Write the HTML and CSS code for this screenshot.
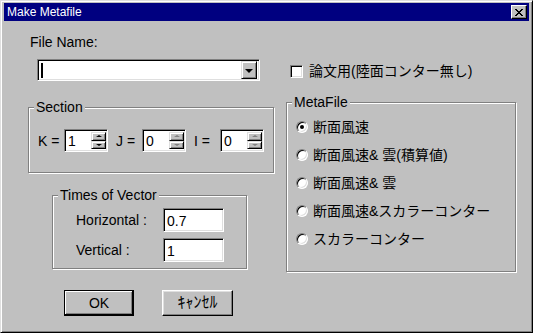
FILE: index.html
```html
<!DOCTYPE html>
<html lang="ja">
<head>
  <meta charset="UTF-8">
  <title>Make Metafile</title>
  <link rel="stylesheet" href="styles.css">
</head>
<body>
  <div class="window">
    <div class="titlebar">
      <span class="title">Make Metafile</span>
      <span class="close-btn">
        <svg width="8" height="7" viewBox="0 0 8 7" shape-rendering="crispEdges">
          <path d="M0 0h2v1h-2zM6 0h2v1h-2zM1 1h2v1h-2zM5 1h2v1h-2zM2 2h4v1h-4zM3 3h2v1h-2zM2 4h4v1h-4zM1 5h2v1h-2zM5 5h2v1h-2zM0 6h2v1h-2zM6 6h2v1h-2z" fill="#000"/>
        </svg>
      </span>
    </div>

    <div class="client">
      <div class="col-left">
        <div class="file-label">File Name:</div>
        <div class="field combo">
          <span class="caret"></span>
          <span class="drop-btn"><i class="arrow-down"></i></span>
        </div>

        <div class="group section">
          <span class="group-title">Section</span>
          <div class="spin-row">
            <div class="spin-item">
              <span class="spin-label">K =</span>
              <div class="field spin">
                <span class="spin-value">1</span>
                <span class="spin-btns">
                  <span class="spin-btn"><i class="arrow-up"></i></span>
                  <span class="spin-btn"><i class="arrow-down small"></i></span>
                </span>
              </div>
            </div>
            <div class="spin-item">
              <span class="spin-label">J =</span>
              <div class="field spin">
                <span class="spin-value">0</span>
                <span class="spin-btns disabled">
                  <span class="spin-btn"><i class="arrow-up"></i></span>
                  <span class="spin-btn"><i class="arrow-down small"></i></span>
                </span>
              </div>
            </div>
            <div class="spin-item">
              <span class="spin-label">I =</span>
              <div class="field spin">
                <span class="spin-value">0</span>
                <span class="spin-btns disabled">
                  <span class="spin-btn"><i class="arrow-up"></i></span>
                  <span class="spin-btn"><i class="arrow-down small"></i></span>
                </span>
              </div>
            </div>
          </div>
        </div>

        <div class="group vector">
          <span class="group-title">Times of Vector</span>
          <div class="vector-grid">
            <span class="vector-label">Horizontal :</span>
            <div class="field text-box">0.7</div>
            <span class="vector-label">Vertical :</span>
            <div class="field text-box">1</div>
          </div>
        </div>

        <div class="buttons">
          <div class="btn btn-default">OK</div>
          <div class="btn btn-kana">ｷｬﾝｾﾙ</div>
        </div>
      </div>

      <div class="col-right">
        <div class="check-row">
          <span class="field checkbox"></span>
          <span class="jp">論文用(陸面コンター無し)</span>
        </div>

        <div class="group metafile">
          <span class="group-title">MetaFile</span>
          <div class="radio-list">
            <div class="radio-row"><span class="radio checked"></span><span class="jp">断面風速</span></div>
            <div class="radio-row"><span class="radio"></span><span class="jp">断面風速&amp; 雲(積算値)</span></div>
            <div class="radio-row"><span class="radio"></span><span class="jp">断面風速&amp; 雲</span></div>
            <div class="radio-row"><span class="radio"></span><span class="jp">断面風速&amp;スカラーコンター</span></div>
            <div class="radio-row"><span class="radio"></span><span class="jp">スカラーコンター</span></div>
          </div>
        </div>
      </div>
    </div>
  </div>
</body>
</html>
```

FILE: styles.css
```css
/* Janela estilo Windows 95 */
* {
  margin: 0;
  padding: 0;
  box-sizing: border-box;
}
body {
  font-family: "Liberation Sans", "Noto Sans CJK JP", sans-serif;
  font-size: 14px;
  color: #000;
  background: #c0c0c0;
}
.window {
  width: 533px;
  height: 333px;
  background: #c0c0c0;
  border: 1px solid;
  border-color: #dfdfdf #000 #000 #dfdfdf;
  box-shadow: inset 1px 1px 0 #fff, inset -1px -1px 0 #808080;
  padding: 2px 3px 3px 3px;
  display: flex;
  flex-direction: column;
}
.titlebar {
  height: 18px;
  background: #000080;
  color: #fff;
  display: flex;
  align-items: center;
  justify-content: space-between;
  padding: 0 2px 0 3px;
}
.title {
  font-size: 12px;
  line-height: 18px;
}
.close-btn {
  width: 16px;
  height: 14px;
  background: #c0c0c0;
  border: 1px solid;
  border-color: #fff #000 #000 #fff;
  box-shadow: inset -1px -1px 0 #808080;
  display: flex;
  align-items: center;
  justify-content: center;
}
.client {
  flex: 1;
  display: flex;
}
.col-left {
  width: 276px;
  display: flex;
  flex-direction: column;
  align-items: flex-start;
}
.col-right {
  flex: 1;
  display: flex;
  flex-direction: column;
  align-items: flex-start;
}

/* campos afundados */
.field {
  background: #fff;
  border: 1px solid;
  border-color: #808080 #fff #fff #808080;
  box-shadow: inset 1px 1px 0 #000, inset -1px -1px 0 #dfdfdf;
}
.file-label {
  margin: 13px 0 0 26px;
  line-height: 16px;
}
.combo {
  margin: 9px 0 0 33px;
  width: 223px;
  height: 22px;
  display: flex;
  align-items: center;
  justify-content: space-between;
  padding: 2px;
}
.caret {
  width: 2px;
  height: 15px;
  background: #000;
  margin-left: 1px;
}
.drop-btn {
  width: 16px;
  height: 18px;
  background: #c0c0c0;
  border: 1px solid;
  border-color: #dfdfdf #000 #000 #dfdfdf;
  box-shadow: inset 1px 1px 0 #fff, inset -1px -1px 0 #808080;
  display: flex;
  align-items: center;
  justify-content: center;
}
.arrow-down {
  width: 0;
  height: 0;
  border-left: 4px solid transparent;
  border-right: 4px solid transparent;
  border-top: 4px solid #000;
  margin-top: 1px;
}
.arrow-down.small, .arrow-up {
  border-left-width: 3px;
  border-right-width: 3px;
}
.arrow-down.small {
  border-top-width: 2px;
}
.arrow-up {
  width: 0;
  height: 0;
  border-left: 3px solid transparent;
  border-right: 3px solid transparent;
  border-bottom: 2px solid #000;
}

/* grupos com borda gravada */
.group {
  position: relative;
  border: 1px solid #808080;
  box-shadow: 1px 1px 0 #fff, inset 1px 1px 0 #fff;
}
.group-title {
  position: absolute;
  top: -9px;
  left: 5px;
  padding: 0 2px;
  line-height: 16px;
  background: #c0c0c0;
}
.section {
  margin: 26px 0 0 24px;
  width: 246px;
  height: 66px;
  padding: 21px 0 0 9px;
}
.spin-row {
  display: flex;
  gap: 8px;
}
.spin-item {
  display: flex;
  align-items: center;
}
.spin-label {
  width: 26px;
  line-height: 16px;
}
.spin {
  width: 44px;
  height: 23px;
  display: flex;
  justify-content: space-between;
  padding: 2px 1px 2px 2px;
}
.spin-value {
  line-height: 19px;
  padding-left: 1px;
}
.spin-btns {
  width: 15px;
  display: flex;
  flex-direction: column;
}
.spin-btn {
  flex: 1;
  background: #c0c0c0;
  border: 1px solid;
  border-color: #dfdfdf #000 #000 #dfdfdf;
  box-shadow: inset 1px 1px 0 #fff, inset -1px -1px 0 #808080;
  display: flex;
  align-items: center;
  justify-content: center;
}
.spin-btns.disabled .arrow-up {
  border-bottom-color: #808080;
}
.spin-btns.disabled .arrow-down {
  border-top-color: #808080;
}

.vector {
  margin: 22px 0 0 48px;
  width: 195px;
  height: 74px;
  padding: 12px 0 0 23px;
}
.vector-grid {
  display: grid;
  grid-template-columns: 87px 61px;
  grid-auto-rows: 24px;
  row-gap: 6px;
  align-items: center;
}
.text-box {
  height: 24px;
  line-height: 20px;
  padding: 2px 3px;
}

.buttons {
  margin: 21px 0 0 60px;
  display: flex;
  gap: 28px;
}
.btn {
  width: 71px;
  height: 26px;
  background: #c0c0c0;
  border: 1px solid;
  border-color: #fff #000 #000 #fff;
  box-shadow: inset -1px -1px 0 #808080, inset 1px 1px 0 #dfdfdf;
  display: flex;
  align-items: center;
  justify-content: center;
  line-height: 16px;
}
.btn-kana {
  font-size: 16px;
}
.btn-default {
  width: 70px;
  border-color: #000;
  box-shadow: inset -1px -1px 0 #000, inset 1px 1px 0 #fff, inset -2px -2px 0 #808080;
}

/* coluna direita */
.jp {
  line-height: 18px;
  white-space: nowrap;
}
.check-row {
  margin: 41px 0 0 10px;
  height: 18px;
  display: flex;
  align-items: center;
  gap: 6px;
}
.checkbox {
  width: 13px;
  height: 13px;
}
.metafile {
  margin: 22px 0 0 6px;
  width: 230px;
  height: 170px;
  padding: 10px 0 0 9px;
}
.radio-row {
  height: 28px;
  display: flex;
  align-items: center;
  gap: 5px;
}
.radio {
  position: relative;
  width: 12px;
  height: 12px;
  border-radius: 50%;
  background: #fff;
  border: 1px solid;
  border-color: #808080 #fff #fff #808080;
  box-shadow: inset 1px 1px 0 #000, inset -1px -1px 0 #dfdfdf;
}
.radio.checked::after {
  content: "";
  position: absolute;
  left: 3px;
  top: 3px;
  width: 4px;
  height: 4px;
  border-radius: 50%;
  background: #000;
}
```
